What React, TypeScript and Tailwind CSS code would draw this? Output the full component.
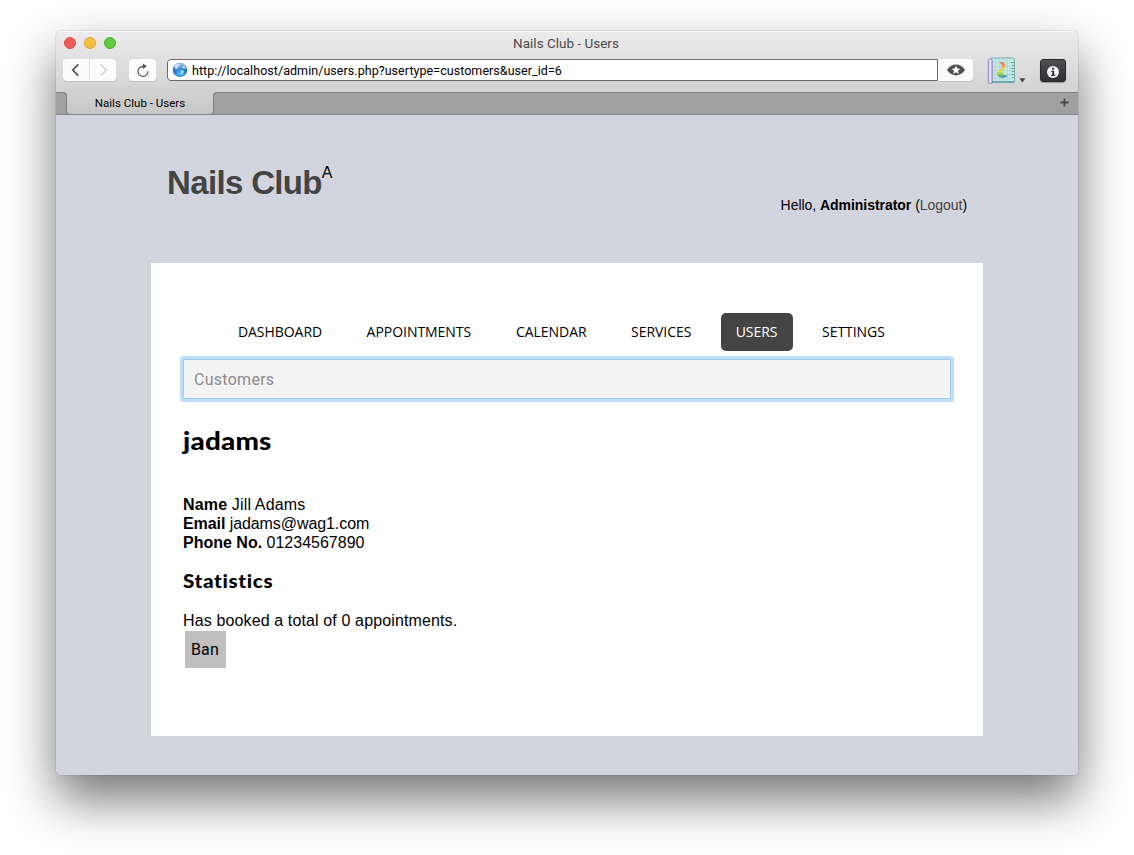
import React from 'react';

const navItems = [
  { label: 'DASHBOARD', box: 'w-[114px]' },
  { label: 'APPOINTMENTS', box: 'w-[135px]' },
  { label: 'CALENDAR', box: 'w-[101px]' },
  { label: 'SERVICES', box: 'w-[90px]' },
  { label: 'USERS', box: 'w-[72px]', active: true },
  { label: 'SETTINGS', box: 'w-[93px]' },
];

const details = [
  { label: 'Name', value: 'Jill Adams', spacing: 'tracking-[0.16px]' },
  { label: 'Email', value: 'jadams@wag1.com', spacing: 'tracking-[-0.08px]' },
  { label: 'Phone No.', value: '01234567890', spacing: 'tracking-normal' },
];

function Globe() {
  return (
    <svg width="16" height="16" viewBox="0 0 16 16">
      <defs>
        <radialGradient id="sea" cx="50%" cy="75%" r="75%">
          <stop offset="0" stopColor="#4fc0f5" />
          <stop offset="0.55" stopColor="#2378cc" />
          <stop offset="1" stopColor="#2560ae" />
        </radialGradient>
        <linearGradient id="shine" x1="0" y1="0" x2="0" y2="1">
          <stop offset="0" stopColor="#fff" stopOpacity="0.7" />
          <stop offset="1" stopColor="#fff" stopOpacity="0" />
        </linearGradient>
      </defs>
      <circle cx="8" cy="8" r="7.2" fill="url(#sea)" />
      <path d="M2.5 4.5 4 2.8 6 2 8 2.3 7.5 3.5 6 4.5 6.3 5.8 5 6.7 4.2 7.6 3 7ZM8.4 8.5 10.5 8 12 9.4 11 11.6 9.8 13.2 8.9 12 9 10.5ZM10.8 4 12.5 4 13.6 5.5 13.8 7 12.4 6.4 11 6.3 10.4 5Z" fill="#a9d6f3" />
      <ellipse cx="8" cy="4.4" rx="5.6" ry="3.5" fill="url(#shine)" />
    </svg>
  );
}

function BlueprintIcon() {
  return (
    <svg width="28" height="28" viewBox="0 0 28 28">
      <defs>
        <linearGradient id="roll" x1="0" x2="1">
          <stop offset="0" stopColor="#b3a5dc" />
          <stop offset="0.5" stopColor="#f3effe" />
          <stop offset="1" stopColor="#a093cb" />
        </linearGradient>
        <linearGradient id="flame" x1="0" y1="0" x2="0.2" y2="1">
          <stop offset="0" stopColor="#f0605c" />
          <stop offset="0.35" stopColor="#f59a50" />
          <stop offset="0.6" stopColor="#f0dd3c" />
          <stop offset="0.85" stopColor="#76c948" />
          <stop offset="1" stopColor="#3f8bc5" />
        </linearGradient>
      </defs>
      <rect x="3.5" y="1" width="24" height="24" rx="1" fill="#c3e8e3" stroke="#62a09f" strokeWidth="0.8" />
      <path d="M8.5 2v23M12.5 2v23M16.5 2v23M20.5 2v23M6 5.5h20M6 9.5h20M6 13.5h20M6 17.5h20M6 21.5h20" stroke="#9dd0cb" strokeWidth="0.5" />
      <path d="M24 5.5h3M25 8.5h2M24 11.5h3M25 14.5h2M24 17.5h3M25 20.5h2" stroke="#3c8e8f" strokeWidth="0.7" />
      <path d="M4 25h23.5" stroke="#3c8e8f" />
      <path d="M12 5.3C15 4.6 18.4 6 18.2 9.1 18 11.3 16 12.3 15.4 14.3 14.9 16.5 16.3 18.3 20.8 18.8 19 21.4 12.4 21.5 10.5 18.8 8.8 16.3 11 13.8 13.5 11.9 15.7 10 15 7 12 5.3Z" fill="url(#flame)" />
      <rect x="1.3" y="2" width="4" height="24.5" rx="1.5" fill="url(#roll)" stroke="#8875b7" strokeWidth="0.7" />
    </svg>
  );
}

function TitleBar() {
  return (
    <div className="relative flex h-[25px] items-start">
      <div className="mt-[6px] ml-2 flex gap-2">
        <span className="size-3 rounded-full border border-[#df4a45] bg-[#ee5d57]" />
        <span className="size-3 rounded-full border border-[#dea236] bg-[#f7be3d]" />
        <span className="size-3 rounded-full border border-[#4db22e] bg-[#61cb42]" />
      </div>
      <div className="absolute inset-x-0 top-[3px] pr-[2px] text-center font-['Roboto',sans-serif] text-[13.5px] leading-[18px] text-[#4b4b4b]">
        Nails Club - Users
      </div>
    </div>
  );
}

function Toolbar() {
  return (
    <div className="flex h-[36px] items-start pt-[3px] pl-[7px]">
      <div className="flex h-[22px] w-[53px] rounded bg-[#fbfbfb] shadow-[0_1px_0_#c4c4c4]">
        <div className="flex w-[27px] items-center justify-center border-r border-[#dfdfdf]">
          <svg width="10" height="14" viewBox="0 0 10 14" fill="none" stroke="#4a4a4a" strokeWidth="1.6">
            <path d="M7.3 1.4 1.7 7l5.600 5.600" />
          </svg>
        </div>
        <div className="flex w-[26px] items-center justify-center">
          <svg width="10" height="14" viewBox="0 0 10 14" fill="none" stroke="#d2d2d2" strokeWidth="1.5">
            <path d="M2.700 1.400 8.300 7l-5.600 5.600" />
          </svg>
        </div>
      </div>
      <div className="ml-[13px] flex h-[22px] w-[27px] items-center justify-center rounded bg-[#fbfbfb] shadow-[0_1px_0_#c4c4c4]">
        <svg width="14" height="15" viewBox="0 0 14 15">
          <path d="M8.5 3.300H6.800a5 5 0 1 0 5.200 5" fill="none" stroke="#555" strokeWidth="1.200" />
          <path d="M6.800.5 10.800 3.300 6.800 6.200Z" fill="#555" />
        </svg>
      </div>
      <div className="ml-[11px] flex h-[22px] w-[771px] items-center rounded-l border border-[#6a6a6a] bg-white pl-1">
        <Globe />
        <span className="mt-[2px] ml-1 font-['Roboto',sans-serif] text-[12.5px] leading-5 tracking-[0.05px] whitespace-nowrap text-black">
          http://localhost/admin/users.php?usertype=customers&amp;user_id=6
        </span>
      </div>
      <div className="flex h-[22px] w-[35px] items-center justify-center rounded-r bg-[#fbfbfb] shadow-[0_1px_0_#c4c4c4]">
        <svg width="18" height="12" viewBox="0 0 18 12">
          <path d="M0 6C2.500 2.200 5.500.6 9 .6S15.500 2.200 18 6c-2.500 3.800-5.500 5.400-9 5.400S2.500 9.800 0 6Z" fill="#505050" />
          <path d="m9 1.500 1.250 3 3.200.250-2.450 2.100.75 3.150L9 8.300 6.250 10 7 6.850l-2.450-2.100 3.200-.250Z" fill="#fff" />
        </svg>
      </div>
      <div className="-mt-[2px] ml-[14px] flex">
        <BlueprintIcon />
      </div>
      <svg className="mt-[19px] ml-[4px]" width="7" height="5" viewBox="0 0 7 5">
        <path d="M.4.3h6L3.400 4.500Z" fill="#444" />
      </svg>
      <div className="ml-[14px] flex h-[23px] w-[26px] items-center justify-center rounded-[3px] border border-[#29292c] bg-gradient-to-b from-[#505053] to-[#303034] shadow-[0_1px_1px_#999]">
        <svg className="mt-[2px]" width="14" height="14" viewBox="0 0 14 14">
          <circle cx="7" cy="7" r="6" fill="#f6f6f6" />
          <path d="M6 2.700h2.200v1.800H6ZM5.300 5.800h2.900v3.900h1v1.200H5V9.700h1.200V7h-.9Z" fill="#333336" />
        </svg>
      </div>
    </div>
  );
}

function TabStrip() {
  return (
    <div className="flex h-[23px] border-b border-[#85858a] bg-[#d0d0d0]">
      <div className="h-[22px] w-[11px] rounded-tr-[4px] border-t border-r border-[#818181] bg-[#a0a0a0]" />
      <div className="h-[22px] w-[146px] bg-[#a0a0a0]">
        <div className="h-[22px] rounded-b-[4px] bg-gradient-to-b from-[#d2d2d2] to-[#c5c5c5] pt-[2px] text-center font-['Roboto',sans-serif] text-[11.5px] leading-[18px] tracking-[0.02px] text-black">
          Nails Club - Users
        </div>
      </div>
      <div className="flex h-[22px] flex-1 justify-end rounded-tl-[4px] border-t border-l border-[#818181] bg-[#a0a0a0]">
        <svg className="mt-[5px] mr-[9px]" width="9" height="9" viewBox="0 0 9 9">
          <path d="M4.500.5v8M.5 4.500h8" stroke="#4c4c4c" strokeWidth="1.800" />
        </svg>
      </div>
    </div>
  );
}

export default function App() {
  return (
    <div className="h-[855px] w-[1134px] overflow-hidden bg-white pt-[31px] pl-[56px] font-['Liberation_Sans',Arial,sans-serif] text-black">
      <div className="h-[744px] w-[1022px] rounded-[5px] shadow-[0_0_1px_rgba(0,0,0,0.6),0_24px_50px_rgba(0,0,0,0.55)]">
        <div className="h-full overflow-hidden rounded-[5px] bg-[#d2d5dd]">
          <div className="bg-gradient-to-b from-[#ececec] to-[#d2d2d2] shadow-[inset_0_1px_0_#f7f7f7]">
            <TitleBar />
            <Toolbar />
          </div>
          <TabStrip />
          <header className="flex h-[148px] justify-between pr-[111px] pl-[111px]">
            <div className="flex items-start">
              <h1 className="mt-[48px] text-[33px] leading-[40px] font-bold tracking-[-0.65px] text-[#444]">Nails Club</h1>
              <span className="mt-[49px] text-[16px] leading-[18px]">A</span>
            </div>
            <p className="mt-[80px] text-[14px] leading-[20px] tracking-[-0.04px]">
              Hello, <b>Administrator</b> (<a className="text-[#444]">Logout</a>)
            </p>
          </header>
          <main className="ml-[95px] h-[473px] w-[832px] bg-white pt-[50px] pl-[32px]">
            <nav className="ml-[40px] flex gap-[14.4px]">
              {navItems.map((item) => (
                <a
                  key={item.label}
                  className={`${item.box} h-[38px] rounded-[5px] text-center font-['Open_Sans',sans-serif] text-[14px] leading-[38px] tracking-[-0.04px] whitespace-nowrap ${item.active ? 'bg-[#444] text-white' : ''}`}
                >
                  {item.label}
                </a>
              ))}
            </nav>
            <div className="mt-[8px] h-[40px] w-[768px] rounded-[1px] border border-[#a3c7e9] bg-[#f3f3f3] pl-[10px] font-['Roboto',sans-serif] text-[16px] leading-[39px] tracking-[0.28px] text-[#8c8c8c] shadow-[0_0_0_3px_#bddefe]">
              Customers
            </div>
            <h2 className="mt-[26px] origin-left scale-x-[1.09] font-['Lato',sans-serif] text-[25.5px] leading-[30px] font-black tracking-[0.2px]">
              jadams
            </h2>
            <div className="mt-[40px] text-[16px] leading-[19px]">
              {details.map((d) => (
                <p key={d.label} className={d.spacing}>
                  <b>{d.label}</b> {d.value}
                </p>
              ))}
            </div>
            <h3 className="mt-[17px] origin-left scale-x-[1.06] font-['Lato',sans-serif] text-[19.5px] leading-[24px] font-black tracking-[0.6px]">
              Statistics
            </h3>
            <p className="mt-[18px] h-[20px] text-[16px] leading-[19px] tracking-[0.13px]">Has booked a total of 0 appointments.</p>
            <button className="ml-[2px] block h-[37px] w-[41px] bg-[#c0c0c0] pr-px text-center font-['Roboto',sans-serif] text-[16px] leading-[37px] tracking-[0.2px]">
              Ban
            </button>
          </main>
        </div>
      </div>
    </div>
  );
}
